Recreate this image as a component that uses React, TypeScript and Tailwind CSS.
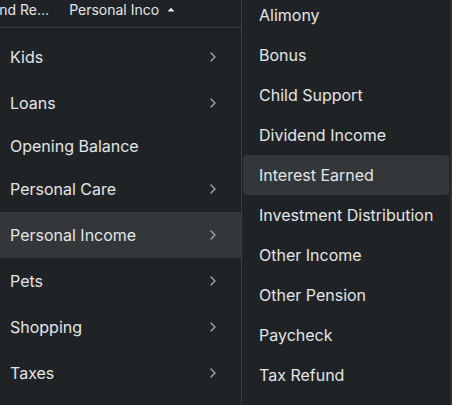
import { ChevronRight } from 'lucide-react'

const leftItems = [
  { label: 'Kids', sub: true },
  { label: 'Loans', sub: true },
  { label: 'Opening Balance', sub: false },
  { label: 'Personal Care', sub: true },
  { label: 'Personal Income', sub: true, active: true },
  { label: 'Pets', sub: true },
  { label: 'Shopping', sub: true },
  { label: 'Taxes', sub: true },
]

const subItems = [
  'Alimony',
  'Bonus',
  'Child Support',
  'Dividend Income',
  'Interest Earned',
  'Investment Distribution',
  'Other Income',
  'Other Pension',
  'Paycheck',
  'Tax Refund',
]

export default function App() {
  return (
    <div
      className="flex w-[452px] h-[405px] overflow-hidden bg-[#202326] text-[#e3e5e7]"
      style={{ fontFamily: 'Inter, "Noto Sans", sans-serif' }}
    >
      <div className="w-[242px] shrink-0 flex flex-col border-r border-[#3a3d41] overflow-hidden">
        <div className="h-[28px] shrink-0 flex items-center pb-[9px] border-b border-[#3a3d41] text-[14px] whitespace-nowrap">
          <span className="ml-[-9px] shrink-0">und Re…</span>
          <span className="ml-[20px] shrink-0 flex items-center gap-[8px]">
            Personal Inco
            <svg width="8" height="5" viewBox="0 0 8 5" className="fill-[#e3e5e7]">
              <path d="M0.5 4.5 L4 0.8 L7.5 4.5 Z" />
            </svg>
          </span>
        </div>
        <div className="pt-[6px] flex flex-col">
          {leftItems.map((it) => (
            <div
              key={it.label}
              className={`flex items-center justify-between pl-[10px] pr-[20px] text-[16px] ${
                it.sub ? 'h-[46px]' : 'h-[40px]'
              } ${it.active ? 'bg-[#33373a]' : ''}`}
            >
              <span>{it.label}</span>
              {it.sub && <ChevronRight size={16} strokeWidth={2} className="text-[#a3a7ab]" />}
            </div>
          ))}
        </div>
      </div>
      <div className="flex-1 flex flex-col border-r-2 border-[#2c2f33]">
        <div className="mt-[-5px] flex flex-col px-[1px]">
          {subItems.map((s) => (
            <div
              key={s}
              className={`h-[40px] shrink-0 flex items-center pl-[16px] text-[16px] rounded-[4px] ${
                s === 'Interest Earned' ? 'bg-[#33373a]' : ''
              }`}
            >
              {s}
            </div>
          ))}
        </div>
      </div>
    </div>
  )
}
